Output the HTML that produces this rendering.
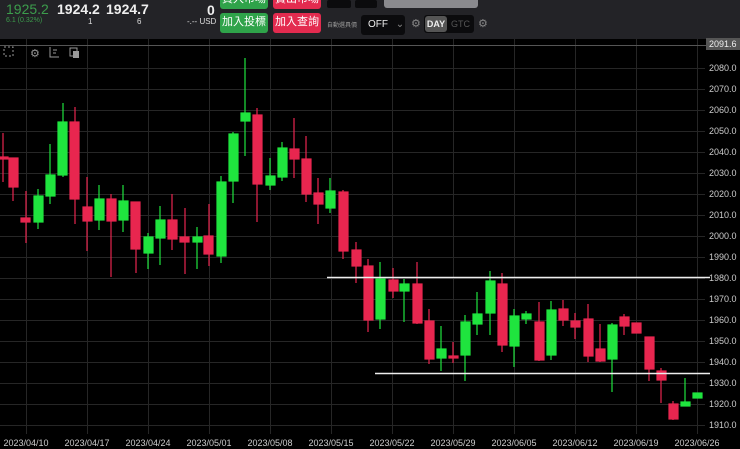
<!DOCTYPE html>
<html><head><meta charset="utf-8"><style>
body{margin:0;width:740px;height:449px;background:#000;overflow:hidden;font-family:"Liberation Sans","Noto Sans CJK TC",sans-serif;position:relative}
.hdr{position:absolute;left:0;top:0;width:740px;height:39px;background:#232327}
.a{position:absolute;white-space:nowrap}
.btn{position:absolute;color:#fff;font-size:11px;text-align:center;border-radius:3px;line-height:19px}
</style></head><body>
<div class="hdr"></div>
<div class="a" style="left:6px;top:1px;font-size:14px;color:#3c9c4c">1925.2</div>
<div class="a" style="left:6px;top:17px;font-size:7px;color:#3c9c4c">6.1 (0.32%)</div>
<div class="a" style="left:57px;top:1px;font-size:14px;color:#eee;font-weight:bold">1924.2</div>
<div class="a" style="left:88px;top:17px;font-size:8px;color:#ddd">1</div>
<div class="a" style="left:106px;top:1px;font-size:14px;color:#eee;font-weight:bold">1924.7</div>
<div class="a" style="left:137px;top:17px;font-size:8px;color:#ddd">6</div>
<div class="a" style="left:207px;top:2px;font-size:14px;color:#eee;font-weight:bold">0</div>
<div class="a" style="left:187px;top:17px;font-size:8px;color:#ddd">-.-- USD</div>
<div class="btn" style="left:220px;top:-10px;width:48px;height:19px;background:#2fa34a">買入市場</div>
<div class="btn" style="left:273px;top:-10px;width:48px;height:19px;background:#e32b4f">賣出市場</div>
<div class="btn" style="left:220px;top:13px;width:48px;height:20px;background:#2fa34a">加入投標</div>
<div class="btn" style="left:273px;top:13px;width:48px;height:20px;background:#e32b4f">加入查詢</div>
<div class="a" style="left:327px;top:0;width:24px;height:8px;background:#0b0b0d;border-radius:2px"></div>
<div class="a" style="left:355px;top:0;width:22px;height:8px;background:#0b0b0d;border-radius:2px"></div>
<div class="a" style="left:384px;top:0;width:94px;height:8px;background:#8a8a8e;border-radius:0 0 3px 3px"></div>
<div class="a" style="left:327px;top:20px;font-size:6px;color:#999">自動選具價</div>
<div class="a" style="left:361px;top:15px;width:44px;height:20px;background:#0b0b0d;border-radius:3px;color:#eee;font-size:10px;line-height:20px;padding-left:7px;box-sizing:border-box">OFF <span style="color:#888;margin-left:5px">&#8964;</span></div>
<div class="a" style="left:411px;top:17px;font-size:11px;color:#888">&#9881;</div>
<div class="a" style="left:424px;top:15px;width:50px;height:18px;background:#0b0b0d;border-radius:3px"></div>
<div class="a" style="left:425px;top:16px;width:22px;height:16px;background:#555;border-radius:3px;color:#eee;font-size:9px;line-height:16px;text-align:center;font-weight:bold">DAY</div>
<div class="a" style="left:451px;top:16px;font-size:9px;line-height:16px;color:#555">GTC</div>
<div class="a" style="left:478px;top:17px;font-size:11px;color:#888">&#9881;</div>
<svg class="a" style="left:0;top:39px" width="740" height="410">
<g stroke="#262626" stroke-width="1">
<line x1="26.5" y1="0" x2="26.5" y2="395"/><line x1="87.5" y1="0" x2="87.5" y2="395"/><line x1="148.5" y1="0" x2="148.5" y2="395"/><line x1="209.5" y1="0" x2="209.5" y2="395"/><line x1="270.5" y1="0" x2="270.5" y2="395"/><line x1="331.5" y1="0" x2="331.5" y2="395"/><line x1="392.5" y1="0" x2="392.5" y2="395"/><line x1="453.5" y1="0" x2="453.5" y2="395"/><line x1="514.5" y1="0" x2="514.5" y2="395"/><line x1="575.5" y1="0" x2="575.5" y2="395"/><line x1="636.5" y1="0" x2="636.5" y2="395"/><line x1="697.5" y1="0" x2="697.5" y2="395"/>
</g>
<g stroke="#262626" stroke-width="1" id="h"></g>
</svg>
<svg class="a" style="left:0;top:0" width="740" height="449">
<g stroke="#262626">
<line x1="0" y1="68.5" x2="705" y2="68.5"/><line x1="0" y1="89.5" x2="705" y2="89.5"/><line x1="0" y1="110.5" x2="705" y2="110.5"/><line x1="0" y1="131.5" x2="705" y2="131.5"/><line x1="0" y1="152.5" x2="705" y2="152.5"/><line x1="0" y1="173.5" x2="705" y2="173.5"/><line x1="0" y1="194.5" x2="705" y2="194.5"/><line x1="0" y1="215.5" x2="705" y2="215.5"/><line x1="0" y1="236.5" x2="705" y2="236.5"/><line x1="0" y1="257.5" x2="705" y2="257.5"/><line x1="0" y1="278.5" x2="705" y2="278.5"/><line x1="0" y1="299.5" x2="705" y2="299.5"/><line x1="0" y1="320.5" x2="705" y2="320.5"/><line x1="0" y1="341.5" x2="705" y2="341.5"/><line x1="0" y1="362.5" x2="705" y2="362.5"/><line x1="0" y1="383.5" x2="705" y2="383.5"/><line x1="0" y1="404.5" x2="705" y2="404.5"/><line x1="0" y1="425.5" x2="705" y2="425.5"/>
</g>
<line x1="0" y1="45.5" x2="706" y2="45.5" stroke="#555"/>
<g stroke-width="1.2">
<g stroke="#e8264f" fill="#e8264f">
<line x1="3" y1="133" x2="3" y2="182"/><rect x="-2" y="157" width="10" height="2"/>
<line x1="13" y1="158" x2="13" y2="201"/><rect x="9" y="158" width="9" height="29"/>
<line x1="26" y1="191" x2="26" y2="243"/><rect x="21" y="218" width="9" height="4"/>
<line x1="75" y1="107" x2="75" y2="224"/><rect x="70" y="122" width="9" height="77"/>
<line x1="87" y1="177" x2="87" y2="251"/><rect x="83" y="207" width="9" height="14"/>
<line x1="111" y1="194" x2="111" y2="277"/><rect x="107" y="199" width="9" height="22"/>
<line x1="136" y1="202" x2="136" y2="273"/><rect x="131" y="202" width="9" height="47"/>
<line x1="172" y1="194" x2="172" y2="250"/><rect x="168" y="220" width="9" height="19"/>
<line x1="185" y1="208" x2="185" y2="274"/><rect x="180" y="237" width="9" height="5"/>
<line x1="209" y1="204" x2="209" y2="266"/><rect x="204" y="236" width="9" height="18"/>
<line x1="257" y1="108" x2="257" y2="222"/><rect x="253" y="115" width="9" height="69"/>
<line x1="294" y1="118" x2="294" y2="178"/><rect x="290" y="149" width="9" height="10"/>
<line x1="306" y1="136" x2="306" y2="202"/><rect x="302" y="159" width="9" height="35"/>
<line x1="318" y1="178" x2="318" y2="224"/><rect x="314" y="193" width="9" height="11"/>
<line x1="343" y1="190" x2="343" y2="259"/><rect x="339" y="192" width="9" height="59"/>
<line x1="356" y1="242" x2="356" y2="283"/><rect x="352" y="250" width="9" height="16"/>
<line x1="368" y1="259" x2="368" y2="332"/><rect x="364" y="266" width="9" height="54"/>
<line x1="393" y1="268" x2="393" y2="298"/><rect x="389" y="280" width="9" height="11"/>
<line x1="417" y1="262" x2="417" y2="324"/><rect x="413" y="284" width="9" height="39"/>
<line x1="429" y1="309" x2="429" y2="364"/><rect x="425" y="321" width="9" height="38"/>
<line x1="453" y1="342" x2="453" y2="363"/><rect x="449" y="356" width="9" height="2"/>
<line x1="502" y1="273" x2="502" y2="352"/><rect x="498" y="284" width="9" height="61"/>
<line x1="539" y1="302" x2="539" y2="361"/><rect x="535" y="322" width="9" height="38"/>
<line x1="563" y1="300" x2="563" y2="326"/><rect x="559" y="309" width="9" height="11"/>
<line x1="575" y1="313" x2="575" y2="339"/><rect x="571" y="321" width="9" height="6"/>
<line x1="588" y1="304" x2="588" y2="362"/><rect x="584" y="319" width="9" height="37"/>
<line x1="600" y1="324" x2="600" y2="362"/><rect x="596" y="349" width="9" height="12"/>
<line x1="624" y1="314" x2="624" y2="335"/><rect x="620" y="317" width="9" height="9"/>
<rect x="632" y="323" width="9" height="10"/>
<line x1="649" y1="337" x2="649" y2="381"/><rect x="645" y="337" width="9" height="32"/>
<line x1="661" y1="368" x2="661" y2="403"/><rect x="657" y="371" width="9" height="9"/>
<line x1="673" y1="401" x2="673" y2="420"/><rect x="669" y="404" width="9" height="15"/>
</g>
<g stroke="#1fe43e" fill="#1fe43e">
<line x1="38" y1="189" x2="38" y2="229"/><rect x="34" y="196" width="9" height="26"/>
<line x1="50" y1="144" x2="50" y2="204"/><rect x="46" y="175" width="9" height="21"/>
<line x1="63" y1="103" x2="63" y2="177"/><rect x="58" y="122" width="9" height="53"/>
<line x1="99" y1="185" x2="99" y2="230"/><rect x="95" y="199" width="9" height="21"/>
<line x1="123" y1="185" x2="123" y2="232"/><rect x="119" y="201" width="9" height="19"/>
<line x1="148" y1="233" x2="148" y2="269"/><rect x="144" y="237" width="9" height="16"/>
<line x1="160" y1="206" x2="160" y2="265"/><rect x="156" y="220" width="9" height="18"/>
<line x1="197" y1="227" x2="197" y2="269"/><rect x="193" y="237" width="9" height="5"/>
<line x1="221" y1="176" x2="221" y2="263"/><rect x="217" y="182" width="9" height="74"/>
<line x1="233" y1="132" x2="233" y2="203"/><rect x="229" y="134" width="9" height="47"/>
<line x1="245" y1="58" x2="245" y2="156"/><rect x="241" y="113" width="9" height="8"/>
<line x1="270" y1="158" x2="270" y2="190"/><rect x="266" y="176" width="9" height="9"/>
<line x1="282" y1="142" x2="282" y2="181"/><rect x="278" y="148" width="9" height="29"/>
<line x1="330" y1="178" x2="330" y2="213"/><rect x="326" y="191" width="9" height="17"/>
<line x1="380" y1="262" x2="380" y2="329"/><rect x="376" y="279" width="9" height="40"/>
<line x1="404" y1="279" x2="404" y2="322"/><rect x="400" y="284" width="9" height="7"/>
<line x1="441" y1="326" x2="441" y2="371"/><rect x="437" y="349" width="9" height="9"/>
<line x1="465" y1="315" x2="465" y2="381"/><rect x="461" y="322" width="9" height="33"/>
<line x1="477" y1="292" x2="477" y2="335"/><rect x="473" y="314" width="9" height="10"/>
<line x1="490" y1="271" x2="490" y2="335"/><rect x="486" y="281" width="9" height="32"/>
<line x1="514" y1="309" x2="514" y2="367"/><rect x="510" y="316" width="9" height="30"/>
<line x1="526" y1="311" x2="526" y2="324"/><rect x="522" y="314" width="9" height="5"/>
<line x1="551" y1="301" x2="551" y2="360"/><rect x="547" y="310" width="9" height="45"/>
<line x1="612" y1="323" x2="612" y2="392"/><rect x="608" y="325" width="9" height="34"/>
<line x1="685" y1="378" x2="685" y2="405"/><rect x="681" y="402" width="9" height="4"/>
<rect x="693" y="393" width="9" height="5"/>
</g>
</g>
<line x1="327" y1="277.5" x2="710" y2="277.5" stroke="#eee" stroke-width="1.5"/>
<line x1="375" y1="373.5" x2="710" y2="373.5" stroke="#eee" stroke-width="1.5"/>
<g fill="#ccc" font-size="9" font-family="Liberation Sans">
<rect x="4" y="47" width="9" height="9" fill="none" stroke="#999" stroke-dasharray="2,2"/>
<text x="30" y="57" fill="#999" font-size="11">&#9881;</text>
<path d="M50 47v10h9M53 50h4M53 53h3" stroke="#999" fill="none"/>
<rect x="70" y="48" width="7" height="8" fill="none" stroke="#999"/><rect x="73" y="51" width="6" height="7" fill="#999"/>
<rect x="706" y="38" width="34" height="12" fill="#555"/>
<text x="709" y="47" fill="#eee">2091.6</text>
<text x="709" y="71">2080.0</text><text x="709" y="92">2070.0</text><text x="709" y="113">2060.0</text><text x="709" y="134">2050.0</text><text x="709" y="155">2040.0</text><text x="709" y="176">2030.0</text><text x="709" y="197">2020.0</text><text x="709" y="218">2010.0</text><text x="709" y="239">2000.0</text><text x="709" y="260">1990.0</text><text x="709" y="281">1980.0</text><text x="709" y="302">1970.0</text><text x="709" y="323">1960.0</text><text x="709" y="344">1950.0</text><text x="709" y="365">1940.0</text><text x="709" y="386">1930.0</text><text x="709" y="407">1920.0</text><text x="709" y="428">1910.0</text>
<g text-anchor="middle"><text x="26" y="446">2023/04/10</text><text x="87" y="446">2023/04/17</text><text x="148" y="446">2023/04/24</text><text x="209" y="446">2023/05/01</text><text x="270" y="446">2023/05/08</text><text x="331" y="446">2023/05/15</text><text x="392" y="446">2023/05/22</text><text x="453" y="446">2023/05/29</text><text x="514" y="446">2023/06/05</text><text x="575" y="446">2023/06/12</text><text x="636" y="446">2023/06/19</text><text x="697" y="446">2023/06/26</text></g>
</g>
</svg>
</body></html>
